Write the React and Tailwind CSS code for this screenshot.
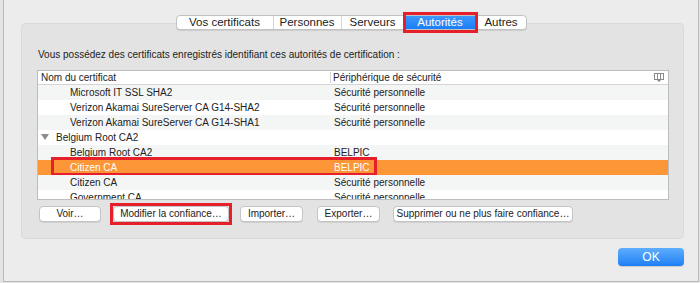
import React from "react";

const rows = [
  { name: "Microsoft IT SSL SHA2", device: "Sécurité personnelle", level: 1 },
  { name: "Verizon Akamai SureServer CA G14-SHA2", device: "Sécurité personnelle", level: 1 },
  { name: "Verizon Akamai SureServer CA G14-SHA1", device: "Sécurité personnelle", level: 1 },
  { name: "Belgium Root CA2", device: "", level: 0 },
  { name: "Belgium Root CA2", device: "BELPIC", level: 1 },
  { name: "Citizen CA", device: "BELPIC", level: 1, selected: true },
  { name: "Citizen CA", device: "Sécurité personnelle", level: 1 },
  { name: "Government CA", device: "Sécurité personnelle", level: 1 },
];

const tabs = [
  { label: "Vos certificats", w: "w-[96px]" },
  { label: "Personnes", w: "w-[68px]" },
  { label: "Serveurs", w: "w-[63px]" },
  { label: "Autorités", w: "w-[73px]", active: true },
  { label: "Autres", w: "w-[49px]" },
];

function Button({ children, w, marked }) {
  return (
    <div className="relative">
      <button
        className={`${w} h-[16px] bg-white border border-[#c4c4c4] rounded-[4px] shadow-[0_1px_0_rgba(0,0,0,0.08)] text-[10px] text-[#222] leading-none flex items-center justify-center`}
      >
        {children}
      </button>
      {marked && (
        <div className="absolute -left-[3px] -top-[3px] -right-[3px] -bottom-[3px] border-[3px] border-[#e5202a]" />
      )}
    </div>
  );
}

export default function App() {
  return (
    <div
      className="w-[700px] h-[283px] bg-[#e4e4e4] flex overflow-hidden"
      style={{ fontFamily: '"Liberation Sans", Arial, sans-serif' }}
    >
      <div className="ml-[3px] w-[696px] h-[282px] bg-[#ececec] border-l border-r border-b border-[#b9b9b9] flex flex-col">
        {/* Tabs */}
        <div className="mt-[15px] flex justify-center relative z-10">
          <div className="flex h-[15px] bg-white border border-[#c2c2c2] rounded-[4px] shadow-[0_1px_1px_rgba(0,0,0,0.1)] text-[11.5px] text-[#222]">
            {tabs.map((t, i) => (
              <div
                key={t.label}
                className={`relative ${t.w} flex items-center justify-center leading-none ${
                  i > 0 && !t.active && !tabs[i - 1].active ? "border-l border-[#d6d6d6]" : ""
                } ${t.active ? "bg-gradient-to-b from-[#3d98fc] to-[#1a7ef7] text-white" : ""}`}
              >
                {t.label}
                {t.active && (
                  <div className="absolute -left-[1px] -right-[1px] -top-[4px] -bottom-[4px] border-[3px] border-[#e5202a]" />
                )}
              </div>
            ))}
          </div>
        </div>

        {/* Group box */}
        <div className="ml-[17px] mt-[-7px] w-[663px] h-[216px] bg-[#e3e3e3] border border-[#dadada] rounded-[4px] flex flex-col pl-[15px] pt-[26px]">
          <div className="text-[10px] text-[#222] leading-none pl-[1px]">
            Vous possédez des certificats enregistrés identifiant ces autorités de certification :
          </div>

          <div className="mt-[10px] w-[632px] h-[130px] bg-white border border-[#bdbdbd] overflow-hidden text-[10px] text-[#222]">
            <div className="h-[14px] flex items-center border-b border-[#d4d4d4] bg-white">
              <div className="w-[293px] pl-[3px] border-r border-[#d4d4d4] h-[11px] leading-[11px]">
                Nom du certificat
              </div>
              <div className="flex-1 pl-[2px] leading-none">Périphérique de sécurité</div>
              <svg width="10" height="9" viewBox="0 0 10 9" className="mr-[4px]">
                <rect x="0.5" y="0.5" width="9" height="6" fill="none" stroke="#8a8a8a" />
                <line x1="3.5" y1="0.5" x2="3.5" y2="6.5" stroke="#8a8a8a" />
                <line x1="6.5" y1="0.5" x2="6.5" y2="6.5" stroke="#8a8a8a" />
                <path d="M5 9 L3 7 L7 7 Z" fill="#8a8a8a" />
              </svg>
            </div>
            {rows.map((r, i) => (
              <div
                key={i}
                className={`relative h-[15px] flex items-center leading-none ${
                  r.selected ? "bg-[#fd9636] text-white" : i % 2 === 0 ? "bg-[#f4f5f5]" : "bg-white"
                }`}
              >
                <div className="w-[294px] flex items-center">
                  {r.level === 0 ? (
                    <>
                      <svg width="8" height="7" viewBox="0 0 8 7" className="ml-[3px] mr-[7px]">
                        <path d="M0 0 L8 0 L4 6 Z" fill="#8c8c8c" />
                      </svg>
                      <span>{r.name}</span>
                    </>
                  ) : (
                    <span className="ml-[32px]">{r.name}</span>
                  )}
                </div>
                <div className="flex-1 pl-[2px]">{r.device}</div>
                {r.selected && (
                  <div className="absolute left-[13px] w-[326px] top-[-3px] h-[19px] border-[3px] border-[#e5202a]" />
                )}
              </div>
            ))}
          </div>

          <div className="mt-[6px] flex items-center pl-[2px]">
            <Button w="w-[62px]">Voir…</Button>
            <div className="ml-[12px]">
              <Button w="w-[116px]" marked>
                Modifier la confiance…
              </Button>
            </div>
            <div className="ml-[11px]">
              <Button w="w-[63px]">Importer…</Button>
            </div>
            <div className="ml-[14px]">
              <Button w="w-[63px]">Exporter…</Button>
            </div>
            <div className="ml-[13px]">
              <Button w="w-[180px]">Supprimer ou ne plus faire confiance…</Button>
            </div>
          </div>
        </div>

        {/* Footer */}
        <div className="mt-[9px] flex justify-end pr-[14px]">
          <button className="w-[66px] h-[18px] rounded-[4px] bg-gradient-to-b from-[#5eaefd] to-[#1c7ef5] text-white text-[12px] leading-none flex items-center justify-center shadow-[0_1px_1px_rgba(0,0,0,0.15)]">
            OK
          </button>
        </div>
      </div>
    </div>
  );
}
